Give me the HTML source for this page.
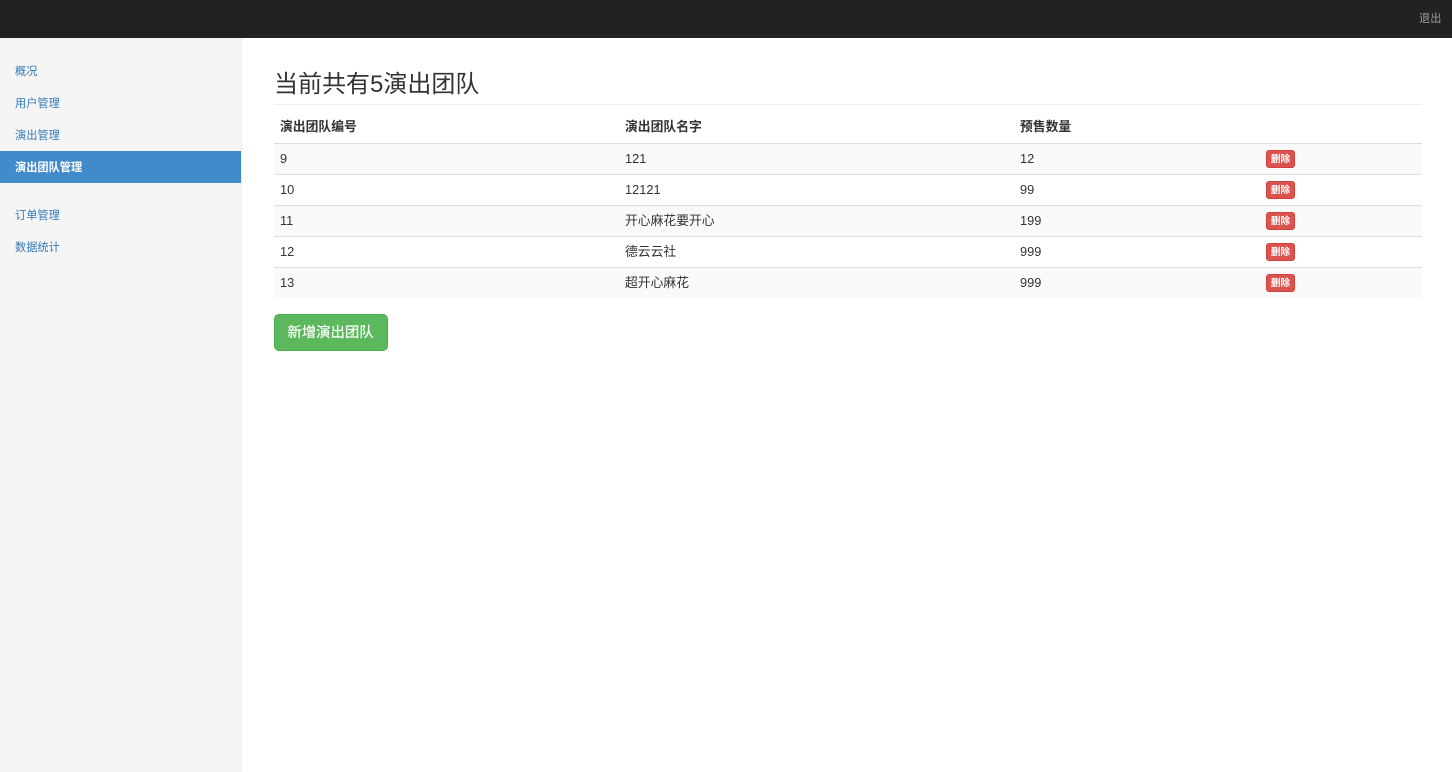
<!DOCTYPE html>
<html lang="zh-CN"><head><meta charset="utf-8"><title>演出团队管理</title>
<style>
html,body{margin:0;padding:0;width:1452px;height:772px;overflow:hidden;background:#fff;}
body{font-family:"Liberation Sans","WenQuanYi Zen Hei","Noto Sans CJK SC",sans-serif;color:#333;position:relative;}
.a{position:absolute;white-space:nowrap;}
#top{left:0;top:0;width:1452px;height:38px;background:#222;}
#side{left:0;top:38px;width:241px;height:734px;background:#f5f5f5;border-right:1px solid #eee;}
.nav{left:15px;font-size:11.2px;line-height:16px;color:#337ab7;}
.cell{font-size:12.8px;line-height:18px;color:#333;}
.line{left:274px;width:1148px;height:1px;background:#ddd;}
.stripe{left:274px;width:1148px;background:#f9f9f9;}
.del{left:1266px;width:29px;height:18px;box-sizing:border-box;background:#d9534f;border:1px solid #d43f3a;border-radius:3px;color:#fff;font-size:9.6px;font-weight:bold;line-height:17px;text-align:center;}
</style></head><body>
<div class="a" id="top"></div>
<div class="a" style="left:1419px;top:11px;font-size:11.2px;line-height:16px;color:#9d9d9d;">退出</div>
<div class="a" id="side"></div>
<div class="a" style="left:0;top:151px;width:241px;height:32px;background:#428bca;"></div>
<div class="a nav" style="top:64px;">概况</div>
<div class="a nav" style="top:96px;">用户管理</div>
<div class="a nav" style="top:128px;">演出管理</div>
<div class="a nav" style="top:160px;color:#fff;font-weight:bold;">演出团队管理</div>
<div class="a nav" style="top:208px;">订单管理</div>
<div class="a nav" style="top:240px;">数据统计</div>

<div class="a" style="left:274px;top:71px;font-size:24px;line-height:28px;color:#333;">当前共有5演出团队</div>
<div class="a" style="left:274px;top:104px;width:1148px;height:1px;background:#eee;"></div>

<div class="a cell" style="left:280px;top:118px;font-weight:bold;">演出团队编号</div>
<div class="a cell" style="left:625px;top:118px;font-weight:bold;">演出团队名字</div>
<div class="a cell" style="left:1020px;top:118px;font-weight:bold;">预售数量</div>

<div class="a stripe" style="top:144px;height:30px;"></div>
<div class="a stripe" style="top:206px;height:30px;"></div>
<div class="a stripe" style="top:268px;height:30px;"></div>
<div class="a line" style="top:143px;"></div>
<div class="a line" style="top:174px;"></div>
<div class="a line" style="top:205px;"></div>
<div class="a line" style="top:236px;"></div>
<div class="a line" style="top:267px;"></div>

<div class="a cell" style="left:280px;top:150px;">9</div>
<div class="a cell" style="left:625px;top:150px;">121</div>
<div class="a cell" style="left:1020px;top:150px;">12</div>
<div class="a del" style="top:150px;">删除</div>

<div class="a cell" style="left:280px;top:181px;">10</div>
<div class="a cell" style="left:625px;top:181px;">12121</div>
<div class="a cell" style="left:1020px;top:181px;">99</div>
<div class="a del" style="top:181px;">删除</div>

<div class="a cell" style="left:280px;top:212px;">11</div>
<div class="a cell" style="left:625px;top:212px;">开心麻花要开心</div>
<div class="a cell" style="left:1020px;top:212px;">199</div>
<div class="a del" style="top:212px;">删除</div>

<div class="a cell" style="left:280px;top:243px;">12</div>
<div class="a cell" style="left:625px;top:243px;">德云云社</div>
<div class="a cell" style="left:1020px;top:243px;">999</div>
<div class="a del" style="top:243px;">删除</div>

<div class="a cell" style="left:280px;top:274px;">13</div>
<div class="a cell" style="left:625px;top:274px;">超开心麻花</div>
<div class="a cell" style="left:1020px;top:274px;">999</div>
<div class="a del" style="top:274px;">删除</div>

<div class="a" style="left:274px;top:314px;width:114px;height:37px;box-sizing:border-box;background:#5cb85c;border:1px solid #4cae4c;border-radius:5px;color:#fff;font-size:14.4px;line-height:37px;text-align:center;text-indent:-1px;-webkit-text-stroke:0.2px #fff;">新增演出团队</div>
</body></html>
